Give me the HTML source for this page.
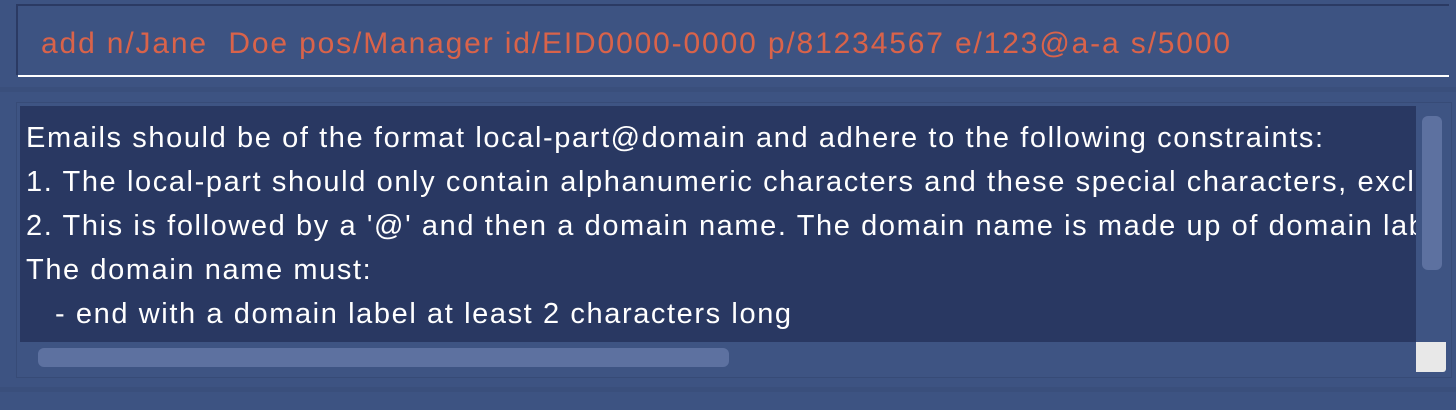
<!DOCTYPE html>
<html><head><style>
html,body{margin:0;padding:0;width:1456px;height:410px;overflow:hidden;background:#3d5382;font-family:"Liberation Sans",sans-serif;}
.abs{position:absolute}
</style></head><body>
<div class="abs" style="left:16px;top:4px;width:1433px;height:71px;border-top:2px solid #2b3a63;border-left:2px solid #2b3a63;box-sizing:border-box;"></div>
<div class="abs" style="left:18px;top:75px;width:1431px;height:2px;background:#fff"></div>
<div class="abs" style="left:41px;top:26px;font-size:30px;line-height:36px;color:#d9634a;white-space:pre;letter-spacing:1.85px">add n/Jane  Doe pos/Manager id/EID0000-0000 p/81234567 e/123@a-a s/5000</div>
<div class="abs" style="left:0;top:87px;width:1456px;height:5px;background:#3a4f7c"></div>
<div class="abs" style="left:16px;top:102px;width:1436px;height:276px;border:1px solid #374b77;background:#3e5483;box-sizing:border-box"></div>
<div class="abs" style="left:20px;top:106px;width:1396px;height:236px;background:#293862;overflow:hidden">
<div style="position:absolute;left:6px;top:10px;font-size:29px;line-height:44px;color:#fff;white-space:pre;letter-spacing:1.6px">Emails should be of the format local-part@domain and adhere to the following constraints:
1. The local-part should only contain alphanumeric characters and these special characters, excluding the parentheses
2. This is followed by a '@' and then a domain name. The domain name is made up of domain labels separated by periods.
The domain name must:
   - end with a domain label at least 2 characters long</div>
</div>
<div class="abs" style="left:1422px;top:116px;width:20px;height:154px;background:#5d71a0;border-radius:6px"></div>
<div class="abs" style="left:38px;top:348px;width:691px;height:19px;background:#5d71a0;border-radius:6px"></div>
<div class="abs" style="left:1416px;top:342px;width:30px;height:30px;background:#e8e8e8;border-radius:0 0 3px 0"></div>
<div class="abs" style="left:0;top:387px;width:1456px;height:5px;background:#3a4f7c"></div>
</body></html>
